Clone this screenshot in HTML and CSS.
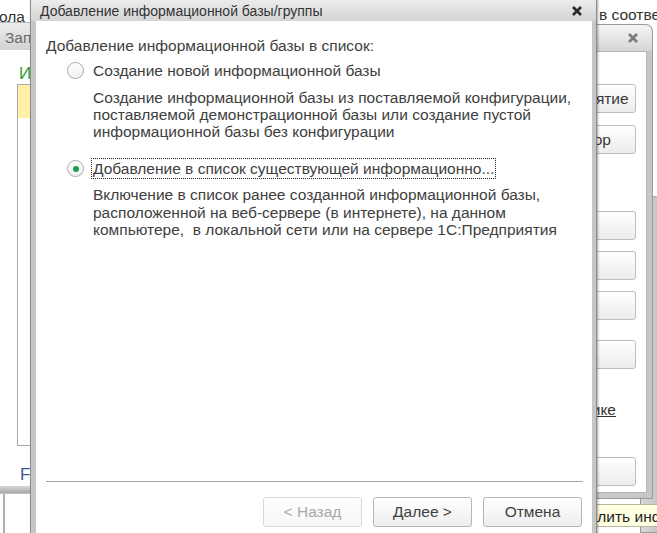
FILE: index.html
```html
<!DOCTYPE html>
<html lang="ru">
<head>
  <meta charset="UTF-8" />
  <title>Добавление информационной базы/группы</title>
  <link rel="stylesheet" href="styles.css">
</head>
<body>

  <div class="desk">

    <!-- main window behind -->
    <div class="main-strip">
      <div class="strip-left"><span>протокола</span></div>
      <div class="strip-right">в соответствии с настройками</div>
    </div>

    <div class="back-left">
      <div class="tabbar"><span>Запуск 1С:Предприятия</span></div>
      <div class="pane">
        <div class="pane-title">Информационные базы</div>
        <div class="list"><div class="list-row selected"></div></div>
        <div class="pane-path">File</div>
      </div>
      <div class="grid-bar"></div>
      <div class="grid-cells"><span></span><span></span></div>
    </div>

    <div class="back-frame"></div>

    <div class="launcher">
      <div class="win-title">
        <svg class="close" width="12" height="12" viewBox="0 0 12 12"><path d="M2 2L10 10M10 2L2 10" stroke="#7a7a7a" stroke-width="2.6"/></svg>
      </div>
      <div class="launcher-body">
        <button class="lbtn">1С:Предприятие</button>
        <button class="lbtn">Конфигуратор</button>
        <button class="lbtn group">Добавить...</button>
        <button class="lbtn">Изменить...</button>
        <button class="lbtn tight">Удалить</button>
        <button class="lbtn spaced">Настройка...</button>
        <a class="llink" href="#">в справочнике</a>
        <button class="lbtn bottom">Выход</button>
      </div>
    </div>

    <div class="tooltip">Удалить информационную базу</div>

    <!-- dialog -->
    <div class="dialog">
      <div class="dlg-title">
        <span>Добавление информационной базы/группы</span>
        <svg class="close" width="12" height="12" viewBox="0 0 12 12"><path d="M2 2L10 10M10 2L2 10" stroke="#2b2b2b" stroke-width="2.6"/></svg>
      </div>
      <div class="dlg-body">
        <div class="dlg-content">
          <p class="lead">Добавление информационной базы в список:</p>

          <div class="option">
            <span class="radio"></span>
            <span class="opt-label">Создание новой информационной базы</span>
          </div>
          <p class="opt-desc">Создание информационной базы из поставляемой конфигурации,<br>поставляемой демонстрационной базы или создание пустой<br>информационной базы без конфигурации</p>

          <div class="option second">
            <span class="radio checked"></span>
            <span class="opt-label focused">Добавление в список существующей информационно...</span>
          </div>
          <p class="opt-desc last">Включение в список ранее созданной информационной базы,<br>расположенной на веб-сервере (в интернете), на данном<br>компьютере,&nbsp; в локальной сети или на сервере 1С:Предприятия</p>
        </div>

        <div class="dlg-sep"></div>

        <div class="dlg-buttons">
          <button class="btn" disabled>&lt; Назад</button>
          <button class="btn">Далее &gt;</button>
          <button class="btn">Отмена</button>
        </div>
      </div>
    </div>

  </div>

</body>
</html>
```

FILE: styles.css
```css
* { box-sizing: border-box; margin: 0; padding: 0; }

body {
  font-family: "Liberation Sans", Arial, sans-serif;
  font-size: 15.5px;
  color: #404040;
  background: #fff;
}

.desk {
  position: relative;
  width: 657px;
  height: 533px;
  overflow: hidden;
  background: #fff;
}

/* ---- background windows ---- */

.main-strip {
  display: flex;
  height: 23px;
  color: #333;
  white-space: nowrap;
  line-height: 17px;
}

.strip-left {
  width: 25px;
  overflow: hidden;
  display: flex;
  justify-content: flex-end;
  padding-top: 8px;
}

.strip-right {
  margin-left: auto;
  width: 59px;
  overflow: hidden;
  padding: 6px 0 0 1px;
}

.back-left {
  position: absolute;
  left: 0;
  top: 22px;
  width: 40px;
  height: 511px;
  display: flex;
  flex-direction: column;
}

.tabbar {
  height: 28px;
  border-top: 1px solid #b8b8b8;
  background: linear-gradient(#ececec, #d2d2d2);
  color: #6a6a6a;
  padding: 6px 0 0 5px;
  white-space: nowrap;
  overflow: hidden;
}

.pane {
  flex: 1;
  padding: 14px 0 0 17px;
  white-space: nowrap;
  overflow: hidden;
}

.pane-title {
  color: #29a03a;
  font-size: 17px;
  padding-left: 2px;
  height: 20px;
}

.list {
  height: 362px;
  border: 1px solid #a8a8a8;
  border-right: none;
  background: #fff;
}

.list-row.selected {
  height: 33px;
  background: #fff0a6;
}

.pane-path {
  color: #3c5894;
  font-size: 17px;
  padding: 19px 0 0 3px;
}

.grid-bar {
  height: 7px;
  margin-top: 2px;
  background: linear-gradient(#d8d8d8, #a8a8a8);
}

.grid-cells {
  height: 40px;
  display: flex;
  border-top: 1px solid #c0c0c0;
}

.grid-cells span {
  width: 18px;
  border-left: 1px solid #b0b0b0;
}

.grid-cells span:first-child {
  width: 4px;
  border-left: none;
  border-right: 1px solid #b0b0b0;
}

.back-frame {
  position: absolute;
  left: 640px;
  top: 196px;
  width: 20px;
  height: 337px;
  border: 1px solid #9a9a9a;
  border-radius: 6px 6px 0 0;
  background: linear-gradient(90deg, #d8d8d8, #c4c4c4);
}

.launcher {
  position: absolute;
  left: 478px;
  top: 24px;
  width: 175px;
  height: 475px;
  border: 1px solid #9a9a9a;
  border-radius: 0 7px 0 0;
  background: linear-gradient(90deg, #d2d2d2, #c6c6c6);
  padding: 0 5px 5px 5px;
  display: flex;
  flex-direction: column;
}

.win-title {
  height: 26px;
  flex-shrink: 0;
  margin: 0 -5px;
  border-radius: 0 7px 0 0;
  background: linear-gradient(#f4f4f4, #d6d6d6);
  display: flex;
  justify-content: flex-end;
  align-items: center;
  padding-right: 13px;
}

.launcher-body {
  flex: 1;
  background: #fff;
  border: 1px solid #b4b4b4;
  display: flex;
  flex-direction: column;
  align-items: flex-end;
  padding: 32px 10px 0 0;
  overflow: hidden;
}

.lbtn {
  flex-shrink: 0;
  width: 136px;
  height: 29px;
  font-family: inherit;
  font-size: 15.5px;
  color: #3a3a3a;
  text-align: left;
  padding-left: 8px;
  border: 1px solid #bdbdbd;
  border-radius: 3px;
  background: linear-gradient(#ffffff, #ececec);
  margin-bottom: 12px;
}

.lbtn.group { margin-top: 45px; margin-bottom: 11px; }
.lbtn.tight { margin-top: -1px; margin-bottom: 20px; }
.lbtn.spaced { margin-bottom: 32px; }
.lbtn.bottom { margin-top: 39px; }

.llink {
  flex-shrink: 0;
  width: 136px;
  line-height: 17px;
  text-align: right;
  padding-right: 20px;
  color: #333;
  white-space: nowrap;
}

.tooltip {
  position: absolute;
  left: 568px;
  top: 504px;
  width: 100px;
  height: 23px;
  background: #ffffe1;
  border: 1px solid #b8b8a0;
  color: #222;
  padding: 3px 0 0 2px;
  white-space: nowrap;
  overflow: hidden;
}

/* ---- dialog ---- */

.dialog {
  position: absolute;
  left: 30px;
  top: 0;
  width: 567px;
  height: 541px;
  border-left: 1px solid #8c8c8c;
  border-right: 1px solid #8c8c8c;
  background: linear-gradient(90deg, #c6c6c6, #d2d2d2 50%, #c6c6c6);
  box-shadow: 1px 0 2px rgba(0, 0, 0, 0.35);
  display: flex;
  flex-direction: column;
}

.dlg-title {
  height: 21px;
  background: linear-gradient(#ececec, #d4d4d4);
  display: flex;
  align-items: center;
  justify-content: space-between;
  padding: 0 13px 0 9px;
  font-size: 14px;
  color: #333;
}

.dlg-body {
  flex: 1;
  margin: 0 4px 0 5px;
  background: #fff;
  display: flex;
  flex-direction: column;
  padding: 0 9px 14px 10px;
}

.dlg-content {
  flex: 1;
  padding-top: 16px;
  line-height: 17px;
}

.lead {
  margin-bottom: 6px;
}

.option {
  display: flex;
  align-items: center;
  padding-left: 21px;
}

.option.second {
  margin-top: 18px;
}

.radio {
  width: 17px;
  height: 17px;
  border: 1px solid #a9a9a9;
  border-radius: 50%;
  background: linear-gradient(#ffffff, #f0f0f0);
  display: flex;
  align-items: center;
  justify-content: center;
  margin-right: 9px;
}

.radio.checked::after {
  content: "";
  width: 6px;
  height: 6px;
  border-radius: 50%;
  background: #1c9e4b;
}

.opt-label {
  padding: 1px 1px;
  border: 1px dotted transparent;
  margin-left: -2px;
}

.opt-label.focused {
  border-color: #222;
}

.opt-desc {
  padding-left: 47px;
  margin-top: 8px;
}

.opt-desc.last {
  margin-top: 7px;
  line-height: 17.5px;
}

.dlg-sep {
  height: 1px;
  background: #a6a6a6;
}

.dlg-buttons {
  display: flex;
  justify-content: flex-end;
  gap: 11px;
  margin-top: 15px;
  padding-right: 1px;
}

.btn {
  width: 99px;
  height: 30px;
  font-family: inherit;
  font-size: 15.5px;
  color: #404040;
  border: 1px solid #b6b6b6;
  border-radius: 3px;
  background: linear-gradient(#ffffff, #ededed);
}

.btn:disabled {
  color: #a9a9a9;
  border-color: #d8d8d8;
  background: linear-gradient(#ffffff, #f6f6f6);
}
```
